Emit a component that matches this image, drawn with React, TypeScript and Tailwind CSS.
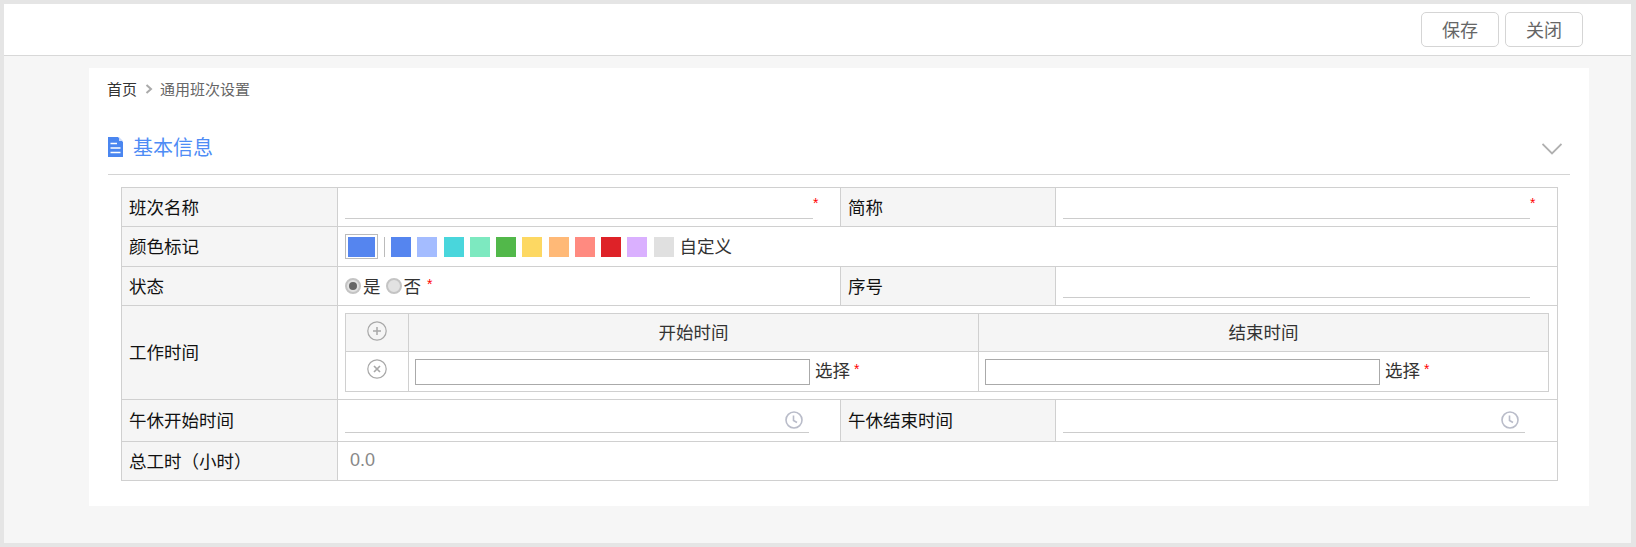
const font = "font-['Microsoft_YaHei','Noto_Sans_CJK_SC','Liberation_Sans',sans-serif]";

const swatches = [
  "bg-[#5585ef]",
  "bg-[#a4bcff]",
  "bg-[#49d6dc]",
  "bg-[#7de9c0]",
  "bg-[#52b84a]",
  "bg-[#fdd862]",
  "bg-[#ffb977]",
  "bg-[#ff8a80]",
  "bg-[#de2228]",
  "bg-[#dab0ff]",
  "bg-[#e0e0e0]",
];

function Star({ className = "" }: { className?: string }) {
  return <span className={`font-['Liberation_Sans'] text-[14px] leading-none text-[#f00] ${className}`}>*</span>;
}

function Clock() {
  return (
    <svg width="18" height="18" viewBox="0 0 18 18" fill="none" stroke="#b9bcc9" strokeWidth="1.6">
      <circle cx="9" cy="9" r="8" />
      <path d="M8.5 4.5V9.5L12 11.5" />
    </svg>
  );
}

function RoundIcon({ cross }: { cross?: boolean }) {
  return (
    <svg width="20" height="20" viewBox="0 0 20 20" fill="none" stroke="#a8a8a8">
      <circle cx="10" cy="10" r="9.2" strokeWidth="1.2" />
      {cross ? <path d="M7 7L13 13M13 7L7 13" strokeWidth="1.7" /> : <path d="M10 6V14M6 10H14" strokeWidth="1.5" />}
    </svg>
  );
}

function Radio({ checked }: { checked?: boolean }) {
  return (
    <span className="-mt-[1px] flex h-[16px] w-[16px] items-center justify-center rounded-full border-2 border-[#c4c4c4] bg-[#e2e2e2]">
      {checked && <span className="h-[8px] w-[8px] rounded-full bg-[#666]" />}
    </span>
  );
}

function Label({ children }: { children: React.ReactNode }) {
  return <td className="border border-[#d0d0d0] bg-[#f5f5f5] pl-[7px] text-[17.5px] text-[#111]">{children}</td>;
}

function Underline({ width, star, clock }: { width: string; star?: boolean; clock?: boolean }) {
  return (
    <div className="flex items-start">
      <div className={`relative h-[20px] border-b border-[#ccc] ${width}`}>
        {clock && (
          <span className="absolute right-[6px] bottom-[3px]">
            <Clock />
          </span>
        )}
      </div>
      {star && <Star className="-mt-[3px]" />}
    </div>
  );
}

function TimeInput() {
  return (
    <td className="border border-[#d0d0d0] pl-[6px]">
      <div className="flex items-center text-[17.5px] text-[#333]">
        <input className="h-[26px] w-[395px] border border-[#aaa] bg-white" />
        <span className="-mt-[2px] ml-[5px]">选择</span>
        <Star className="ml-[4px] -mt-[6px]" />
      </div>
    </td>
  );
}

export default function App() {
  return (
    <div className={`flex h-[547px] flex-col border-t-4 border-r-[5px] border-b-4 border-l-4 border-[#e5e5e5] bg-[#f6f6f6] ${font}`}>
      {/* Toolbar */}
      <div className="flex h-[52px] items-start justify-end gap-[6px] border-b border-[#d8d8d8] bg-white pt-[8px] pr-[48px]">
        <button className="h-[35px] w-[78px] rounded-[5px] border border-[#d5d5d5] text-[18px] text-[#666]">保存</button>
        <button className="h-[35px] w-[78px] rounded-[5px] border border-[#d5d5d5] text-[18px] text-[#666]">关闭</button>
      </div>

      {/* Card */}
      <div className="mt-[12px] ml-[85px] h-[438px] w-[1500px] bg-white pt-[11px]">
        <div className="flex h-[20px] items-center pl-[18px] text-[15px]">
          <span className="text-[#333]">首页</span>
          <svg className="mr-[7px] ml-[8px]" width="8" height="10" viewBox="0 0 8 10" fill="none" stroke="#aaa" strokeWidth="2">
            <path d="M1.5 1L6 5L1.5 9" />
          </svg>
          <span className="text-[#666]">通用班次设置</span>
        </div>

        {/* Section title */}
        <div className="mt-[28px] ml-[19px] flex h-[48px] w-[1462px] items-start border-b border-[#d4d4d4] pr-[8px]">
          <svg className="mt-[10px]" width="15" height="20" viewBox="0 0 15 20">
            <path d="M0 0H10L15 5V20H0Z" fill="#4a86f0" />
            <path d="M11 0L15 4H11Z" fill="#c9dafb" />
            <path d="M2.5 6.5H9M2.5 11H12.5M2.5 15.5H12.5" stroke="#fff" strokeWidth="1.4" />
          </svg>
          <span className="mt-[6px] ml-[10px] text-[20px] leading-[28px] text-[#4e8cf5]">基本信息</span>
          <svg className="mt-[16px] ml-auto" width="20" height="12" viewBox="0 0 20 12" fill="none" stroke="#b0b0b0" strokeWidth="1.8">
            <path d="M0.5 1L10 10.5L19.5 1" />
          </svg>
        </div>

        {/* Form */}
        <table className="mt-[12px] ml-[32px] w-[1436px] table-fixed border-collapse">
          <colgroup>
            <col className="w-[216px]" />
            <col className="w-[503px]" />
            <col className="w-[215px]" />
            <col className="w-[502px]" />
          </colgroup>
          <tbody>
            <tr className="h-[39px]">
              <Label>班次名称</Label>
              <td className="border border-[#d0d0d0] pb-[7px] pl-[7px] align-bottom">
                <Underline width="w-[468px]" star />
              </td>
              <Label>简称</Label>
              <td className="border border-[#d0d0d0] pb-[7px] pl-[7px] align-bottom">
                <Underline width="w-[467px]" star />
              </td>
            </tr>
            <tr className="h-[40px]">
              <Label>颜色标记</Label>
              <td colSpan={3} className="border border-[#d0d0d0] pl-[7px]">
                <div className="flex items-center text-[17.5px] text-[#333]">
                  <span className="flex h-[25px] w-[33px] items-center justify-center border border-[#bbb]">
                    <span className="h-[20px] w-[27px] bg-[#5585ef]" />
                  </span>
                  <span className="mx-[6px] h-[20px] w-px bg-[#bbb]" />
                  <div className="flex gap-[6.25px]">
                    {swatches.map((color) => (
                      <span key={color} className={`h-[20px] w-[20px] ${color}`} />
                    ))}
                  </div>
                  <span className="ml-[6px]">自定义</span>
                </div>
              </td>
            </tr>
            <tr className="h-[39px]">
              <Label>状态</Label>
              <td className="border border-[#d0d0d0] pl-[7px]">
                <div className="flex items-center text-[17.5px] text-[#333]">
                  <Radio checked />
                  <span className="ml-[2px]">是</span>
                  <span className="ml-[5px]">
                    <Radio />
                  </span>
                  <span className="ml-[2px]">否</span>
                  <Star className="ml-[6px] -mt-[4px]" />
                </div>
              </td>
              <Label>序号</Label>
              <td className="border border-[#d0d0d0] pb-[7px] pl-[7px] align-bottom">
                <Underline width="w-[467px]" />
              </td>
            </tr>
            <tr className="h-[94px]">
              <Label>工作时间</Label>
              <td colSpan={3} className="border border-[#d0d0d0] pl-[7px]">
                <table className="w-[1203px] table-fixed border-collapse">
                  <colgroup>
                    <col className="w-[63px]" />
                    <col className="w-[570px]" />
                    <col className="w-[570px]" />
                  </colgroup>
                  <tbody>
                    <tr className="h-[38px] bg-[#f5f5f5] text-center text-[17.5px] text-[#333]">
                      <td className="border border-[#d0d0d0]">
                        <div className="flex justify-center pb-[3px]">
                          <RoundIcon />
                        </div>
                      </td>
                      <td className="border border-[#d0d0d0]">开始时间</td>
                      <td className="border border-[#d0d0d0]">结束时间</td>
                    </tr>
                    <tr className="h-[40px]">
                      <td className="border border-[#d0d0d0]">
                        <div className="flex justify-center pb-[5px]">
                          <RoundIcon cross />
                        </div>
                      </td>
                      <TimeInput />
                      <TimeInput />
                    </tr>
                  </tbody>
                </table>
              </td>
            </tr>
            <tr className="h-[42px]">
              <Label>午休开始时间</Label>
              <td className="border border-[#d0d0d0] pb-[8px] pl-[7px] align-bottom">
                <Underline width="w-[464px]" clock />
              </td>
              <Label>午休结束时间</Label>
              <td className="border border-[#d0d0d0] pb-[8px] pl-[7px] align-bottom">
                <Underline width="w-[462px]" clock />
              </td>
            </tr>
            <tr className="h-[39px]">
              <Label>总工时（小时）</Label>
              <td colSpan={3} className="border border-[#d0d0d0] pb-[2px] pl-[12px] font-['Liberation_Sans'] text-[18px] text-[#888]">
                0.0
              </td>
            </tr>
          </tbody>
        </table>
      </div>
    </div>
  );
}
